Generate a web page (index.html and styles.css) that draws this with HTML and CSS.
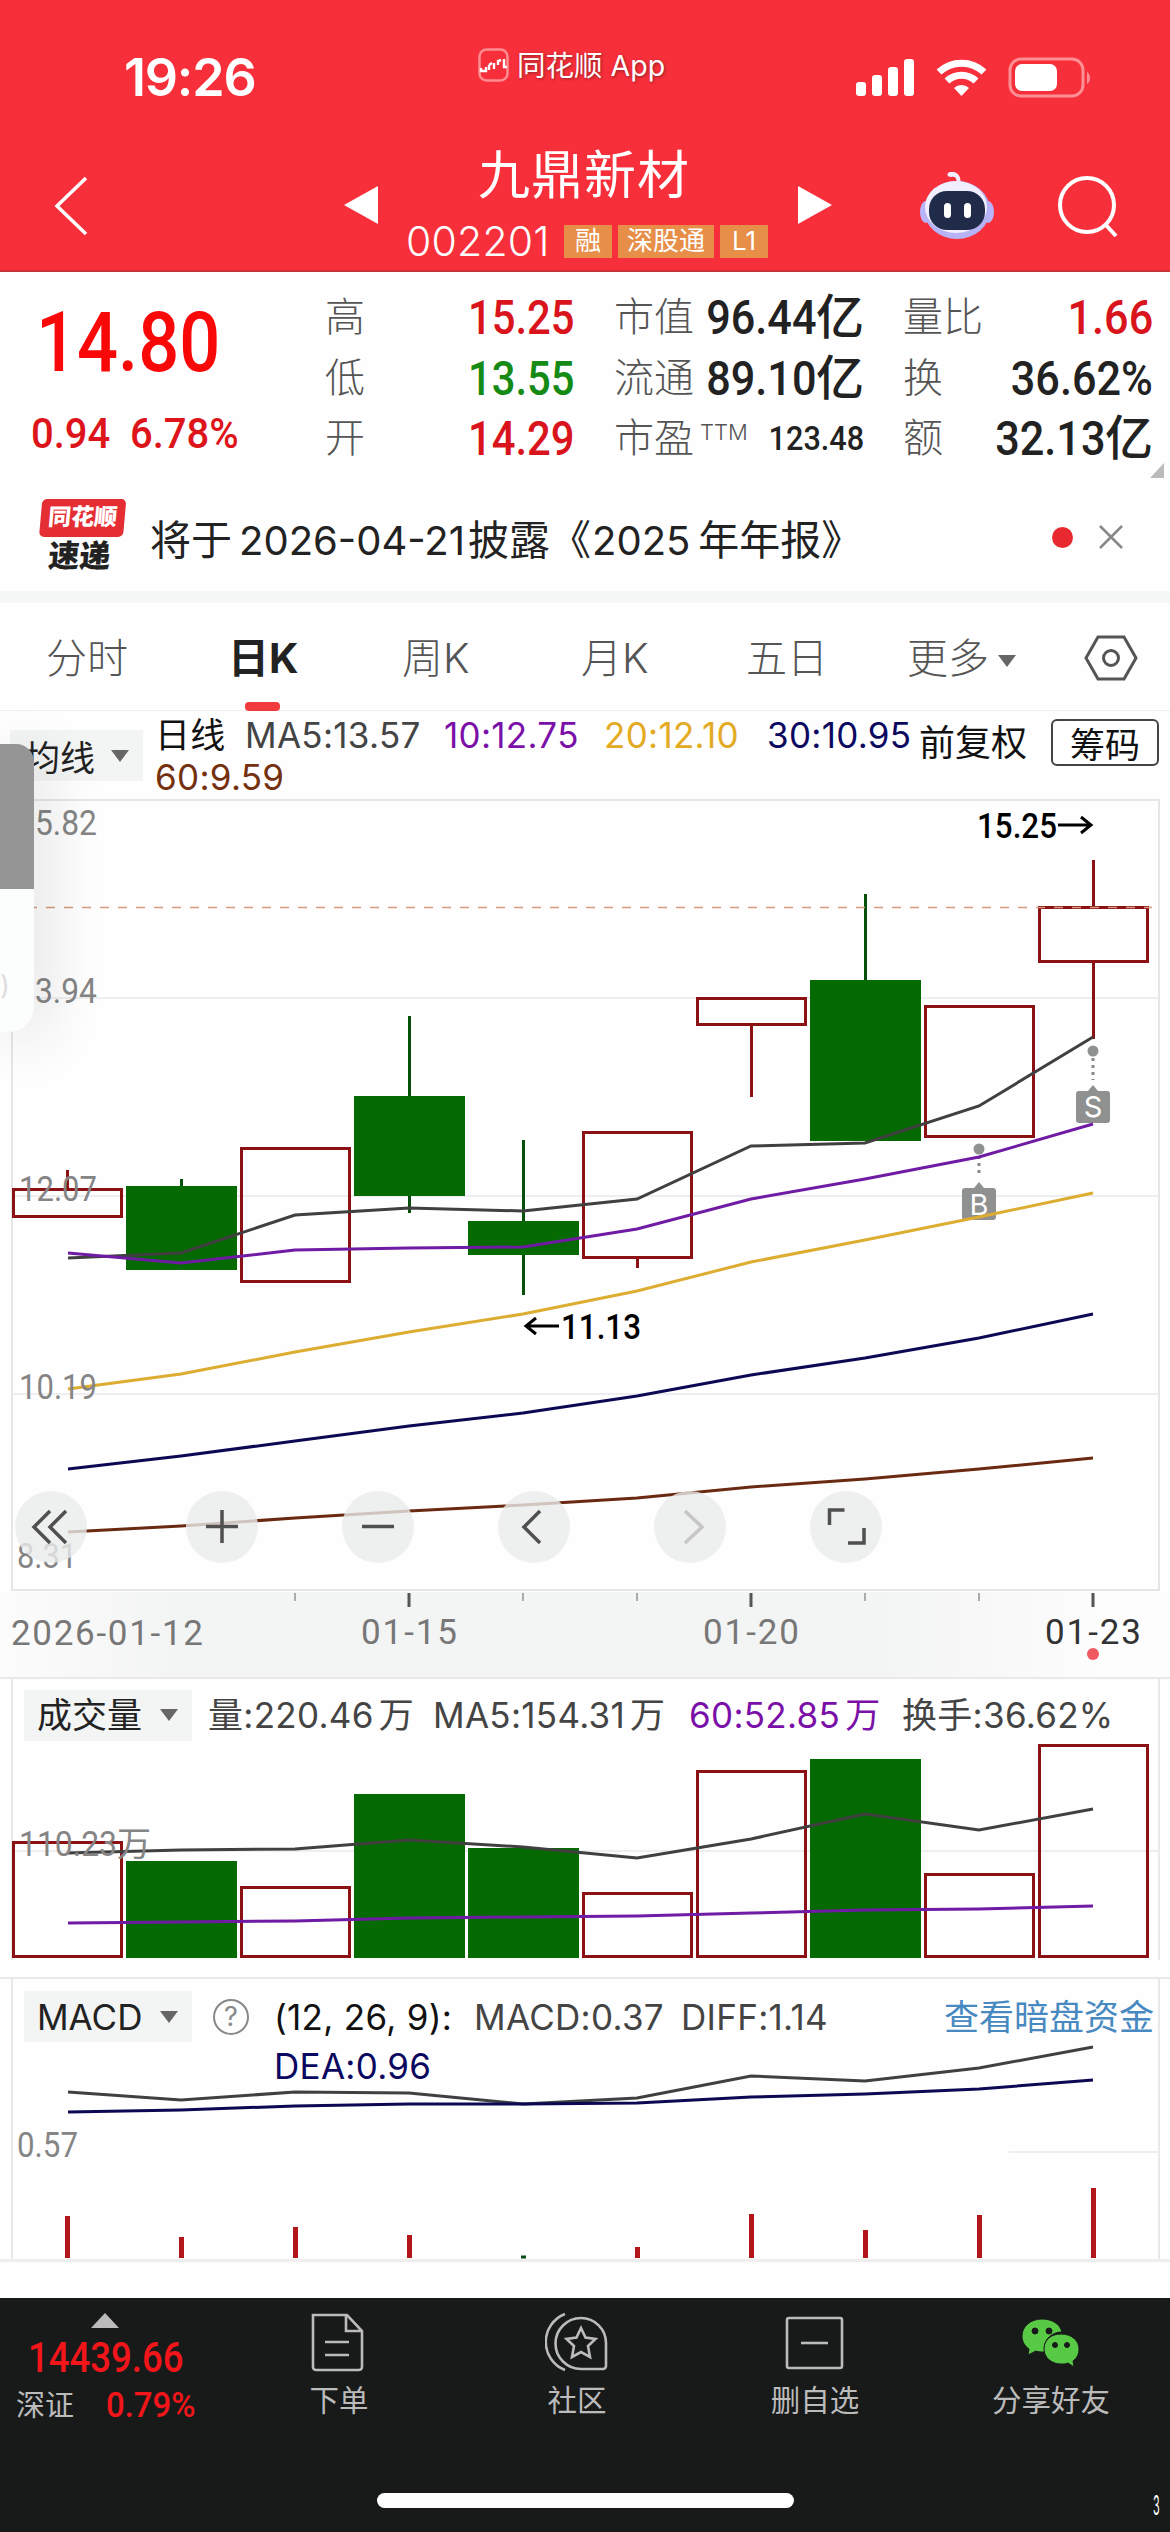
FILE: index.html
```html
<!DOCTYPE html>
<html lang="zh-CN">
<head>
  <meta charset="UTF-8">
  <meta name="viewport" content="width=device-width, initial-scale=1.0">
  <title>九鼎新材 002201</title>
  <link rel="stylesheet" href="styles.css">
</head>
<body>
  <header class="header">
    <div class="status-bar">
      <span class="time">19:26</span>
      <div class="source-app">
        <svg width="32" height="34" viewBox="0 0 32 34" fill="none" stroke="#fff">
          <rect x="1.5" y="1.5" width="28" height="31" rx="7" stroke="#ff8c90" stroke-width="2.5"/>
          <path d="M3 20v3h5v-4M11 17v5M11 17l3-2M16 15v6M20 17v-4l3-1M26 11v8h3" stroke-width="2.4"/>
        </svg>
        <span>同花顺 App</span>
      </div>
      <svg class="status-icons" width="236" height="44" viewBox="0 0 236 44">
        <g fill="#fff">
          <rect x="0" y="26" width="10" height="14" rx="3"/>
          <rect x="16" y="19" width="10" height="21" rx="3"/>
          <rect x="32" y="11" width="10" height="29" rx="3"/>
          <rect x="48" y="3" width="10" height="37" rx="3"/>
        </g>
        <g fill="none" stroke="#fff" stroke-width="7">
          <path d="M83 16a33 33 0 0 1 45 0"/>
          <path d="M91 25a21 21 0 0 1 29 0"/>
        </g>
        <path d="M98 32a11 11 0 0 1 15 0l-7.500 8z" fill="#fff"/>
        <rect x="154" y="3" width="73" height="37" rx="11" fill="none" stroke="#fc8f94" stroke-width="3"/>
        <rect x="159" y="8" width="42" height="27" rx="7" fill="#fff"/>
        <path d="M231 16v12c4-2 4-10 0-12z" fill="#fc8f94"/>
      </svg>
    </div>
    <div class="nav-bar">
      <svg class="back" width="36" height="62" viewBox="0 0 36 62"><path d="M33 3L4 31l29 28" fill="none" stroke="#fff" stroke-width="3.500"/></svg>
      <svg class="prev" width="34" height="38" viewBox="0 0 34 38"><path d="M34 0v38L0 19z" fill="#fff"/></svg>
      <div class="stock">
        <h1>九鼎新材</h1>
        <div class="stock-code">
          <span class="code">002201</span>
          <span class="tag">融</span>
          <span class="tag tag-wide">深股通</span>
          <span class="tag">L1</span>
        </div>
      </div>
      <svg class="next" width="34" height="38" viewBox="0 0 34 38"><path d="M0 0v38l34-19z" fill="#fff"/></svg>
      <svg class="robot" width="74" height="68" viewBox="0 0 74 68">
        <path d="M36 12c2-7-2-8-5-7-4 0-5-4-1-5 7-1 12 4 10 12z" fill="#f4efff"/>
        <ellipse cx="6" cy="40" rx="6" ry="11" fill="#b9b4fb"/>
        <ellipse cx="68" cy="40" rx="6" ry="11" fill="#b9b4fb"/>
        <ellipse cx="37" cy="38" rx="33" ry="29" fill="#b7b2f6"/>
        <ellipse cx="36" cy="35" rx="31" ry="26" fill="#f1eeff"/>
        <rect x="9" y="19" width="56" height="39" rx="18" fill="#202a49"/>
        <rect x="24" y="31" width="7" height="15" rx="3.500" fill="#fff"/>
        <rect x="44" y="31" width="7" height="15" rx="3.500" fill="#fff"/>
      </svg>
      <svg class="search" width="64" height="64" viewBox="0 0 64 64" fill="none" stroke="#fff" stroke-width="4"><circle cx="31" cy="30" r="27"/><path d="M49 49l11 12"/></svg>
    </div>
  </header>

  <section class="quote">
    <div class="quote-main">
      <div class="price"><span class="din">14.80</span></div>
      <div class="change"><span class="din">0.94</span><span class="din">6.78%</span></div>
    </div>
    <dl class="quote-col col-a">
      <dt>高</dt><dd class="up"><span class="din">15.25</span></dd>
      <dt>低</dt><dd class="down"><span class="din">13.55</span></dd>
      <dt>开</dt><dd class="up"><span class="din">14.29</span></dd>
    </dl>
    <dl class="quote-col col-b">
      <dt>市值</dt><dd><span class="din">96.44</span>亿</dd>
      <dt>流通</dt><dd><span class="din">89.10</span>亿</dd>
      <dt>市盈<sup>TTM</sup></dt><dd class="small"><span class="din">123.48</span></dd>
    </dl>
    <dl class="quote-col col-c">
      <dt>量比</dt><dd class="up"><span class="din">1.66</span></dd>
      <dt>换</dt><dd><span class="din">36.62%</span></dd>
      <dt>额</dt><dd><span class="din">32.13</span>亿</dd>
    </dl>
    <i class="corner"></i>
  </section>

  <section class="news">
    <div class="news-logo">
      <span class="news-logo-top">同花顺</span>
      <span class="news-logo-bottom">速递</span>
    </div>
    <p>将于<span class="num">2026-04-21</span>披露《<span class="num year">2025</span>年年报》</p>
    <i class="dot"></i>
    <svg width="24" height="24" viewBox="0 0 24 24"><path d="M1 1l22 22M23 1L1 23" stroke="#888" stroke-width="2.500"/></svg>
  </section>

  <nav class="tabs">
    <a>分时</a>
    <a class="active">日K</a>
    <a>周K</a>
    <a>月K</a>
    <a>五日</a>
    <a>更多<i class="caret"></i></a>
    <svg width="54" height="46" viewBox="0 0 54 46" fill="none" stroke="#555" stroke-width="3"><path d="M14 2h26l12 21-12 21H14L2 23z"/><circle cx="27" cy="23" r="7.500"/></svg>
  </nav>

  <section class="ma-row">
    <div class="picker">均线<i class="caret"></i></div>
    <div class="ma-values">
      <span class="ma-name">日线</span>
      <span>MA5:13.57</span>
      <span class="purple">10:12.75</span>
      <span class="yellow">20:12.10</span>
      <span class="navy">30:10.95</span>
      <span class="brown">60:9.59</span>
    </div>
    <span class="adjust">前复权</span>
    <button class="chips">筹码</button>
  </section>

  <section class="chart">
    <svg width="1170" height="794" viewBox="0 798 1170 794">
      <rect class="frame" x="12" y="800" width="1147" height="790"/>
      <path class="grid" d="M12 998H1158M12 1196H1158M12 1394H1158"/>
      <g class="red-candle">
        <path d="M67.500 1170v18M637.500 1259v9M751.500 1026v71M1093.500 860v46M1093.500 963v76"/>
        <rect x="13.500" y="1189.500" width="108" height="27"/>
        <rect x="241.500" y="1148.500" width="108" height="133"/>
        <rect x="583.500" y="1132.500" width="108" height="125"/>
        <rect x="697.500" y="998.500" width="108" height="26"/>
        <rect x="925.500" y="1006.500" width="108" height="130"/>
        <rect x="1039.500" y="907.500" width="108" height="54"/>
      </g>
      <g class="green-candle">
        <path d="M181.500 1179v20M409.500 1016v197M523.500 1140v155M865.500 894v100"/>
        <rect x="126" y="1186" width="111" height="84"/>
        <rect x="354" y="1096" width="111" height="100"/>
        <rect x="468" y="1221" width="111" height="34"/>
        <rect x="810" y="980" width="111" height="161"/>
      </g>
      <path class="last-price" d="M28 907.500H1152"/>
      <polyline class="line ma5" points="68,1258 181,1253 295,1215 409,1208 523,1211 637,1199 751,1146 865,1143 979,1106 1093,1037"/>
      <g class="marker">
        <circle cx="1093" cy="1051" r="5.500"/>
        <path class="dots" d="M1093 1058v22"/>
        <path d="M1080 1091h8l5-6 5 6h9a3 3 0 0 1 3 3v26a3 3 0 0 1-3 3h-28a3 3 0 0 1-3-3v-26a3 3 0 0 1 3-3z"/>
        <text x="1093" y="1117">S</text>
        <circle cx="979" cy="1149" r="5.500"/>
        <path class="dots" d="M979 1156v20"/>
        <path d="M966 1188h8l5-6 5 6h9a3 3 0 0 1 3 3v26a3 3 0 0 1-3 3h-28a3 3 0 0 1-3-3v-26a3 3 0 0 1 3-3z"/>
        <text x="979" y="1215">B</text>
      </g>
      <polyline class="line ma10" points="68,1253 181,1263 295,1250 409,1248 523,1247 637,1229 751,1199 865,1179 979,1157 1093,1124"/>
      <polyline class="line ma20" points="68,1389 181,1374 295,1352 409,1332 523,1314 637,1291 751,1262 865,1240 979,1217 1093,1193"/>
      <polyline class="line ma30" points="68,1469 181,1456 295,1441 409,1426 523,1413 637,1396 751,1375 865,1358 979,1338 1093,1314"/>
      <polyline class="line ma60" points="68,1532 181,1526 295,1518 409,1511 523,1505 637,1498 751,1487 865,1479 979,1469 1093,1458"/>
      <g class="axis">
        <text x="35" y="835" textLength="62" lengthAdjust="spacingAndGlyphs">5.82</text>
        <text x="35" y="1003" textLength="62" lengthAdjust="spacingAndGlyphs">3.94</text>
        <text x="19" y="1201" textLength="78" lengthAdjust="spacingAndGlyphs">12.07</text>
        <text x="19" y="1399" textLength="78" lengthAdjust="spacingAndGlyphs">10.19</text>
        <text x="17" y="1568" textLength="60" lengthAdjust="spacingAndGlyphs">8.31</text>
      </g>
      <g class="peak">
        <text x="977" y="838" textLength="80" lengthAdjust="spacingAndGlyphs">15.25</text>
        <text x="561" y="1339" textLength="80" lengthAdjust="spacingAndGlyphs">11.13</text>
        <path d="M1058 825h33M1081 817l10 8-10 8M559 1326h-33M536 1318l-10 8 10 8"/>
      </g>
      <g class="tool">
        <circle cx="51" cy="1527" r="36"/><circle cx="222" cy="1527" r="36"/><circle cx="378" cy="1527" r="36"/>
        <circle cx="534" cy="1527" r="36"/><circle cx="690" cy="1527" r="36"/><circle cx="846" cy="1527" r="36"/>
        <path d="M50 1511l-16 16 16 16M66 1511l-16 16 16 16M206 1526.500h32M222 1510v33M362 1526.500h32M540 1511l-16 16 16 16M829.500 1525v-15h15M864 1528v15h-16"/>
        <path class="disabled" d="M685 1511l17 16-17 16"/>
      </g>
    </svg>
    <div class="side-panel"><i>)</i></div>
  </section>

  <section class="dates">
    <svg width="1170" height="85" viewBox="0 1592 1170 85">
      <path d="M295 1593v8M523 1593v8M637 1593v8M865 1593v8M979 1593v8" stroke="#aaa" stroke-width="2"/>
      <path d="M409 1593v14M751 1593v14M1093 1593v14" stroke="#555" stroke-width="3"/>
      <g class="axis date">
        <text x="11" y="1645" textLength="192">2026-01-12</text>
        <text x="361" y="1644" textLength="96">01-15</text>
        <text x="703" y="1644" textLength="96">01-20</text>
        <text class="today" x="1045" y="1644" textLength="96">01-23</text>
      </g>
      <circle cx="1093" cy="1654" r="6" fill="#ef5a62"/>
    </svg>
  </section>

  <section class="panel volume">
    <div class="panel-head">
      <div class="picker">成交量<i class="caret"></i></div>
      <span>量:220.46<b>万</b></span>
      <span>MA5:154.31<b>万</b></span>
      <span class="purple">60:52.85<b>万</b></span>
      <span>换手:36.62%</span>
    </div>
    <svg width="1170" height="218" viewBox="0 1742 1170 218">
      <path class="grid" d="M12 1851H1158"/>
      <g class="red-candle">
        <rect x="13.500" y="1842.500" width="108" height="114"/>
        <rect x="241.500" y="1887.500" width="108" height="69"/>
        <rect x="583.500" y="1893.500" width="108" height="63"/>
        <rect x="697.500" y="1771.500" width="108" height="185"/>
        <rect x="925.500" y="1874.500" width="108" height="82"/>
        <rect x="1039.500" y="1745.500" width="108" height="211"/>
      </g>
      <g class="green-candle">
        <rect x="126" y="1861" width="111" height="97"/>
        <rect x="354" y="1794" width="111" height="164"/>
        <rect x="468" y="1848" width="111" height="110"/>
        <rect x="810" y="1759" width="111" height="199"/>
      </g>
      <polyline class="line ma5" points="68,1853 181,1850 295,1849 409,1840 523,1847 637,1858 751,1839 865,1814 979,1830 1093,1809"/>
      <polyline class="line ma10" points="68,1923 181,1922 295,1921 409,1918 523,1917 637,1916 751,1913 865,1910 979,1909 1093,1906"/>
      <text class="axis" x="19" y="1856" textLength="98" lengthAdjust="spacingAndGlyphs">110.23</text>
      <text class="axis cjk" x="117" y="1856">万</text>
    </svg>
  </section>

  <section class="panel macd">
    <div class="panel-head">
      <div class="picker">MACD<i class="caret"></i></div>
      <i class="help">?</i>
      <span class="black">(12, 26, 9):</span>
      <span>MACD:0.37</span>
      <span>DIFF:1.14</span>
      <a class="link">查看暗盘资金</a>
      <span class="navy dea">DEA:0.96</span>
    </div>
    <svg width="1170" height="222" viewBox="0 2040 1170 222">
      <path class="grid" d="M1009 2152H1158"/>
      <polyline class="line ma5" points="68,2092 181,2100 295,2092 409,2093 523,2104 637,2098 751,2076 865,2081 979,2068 1093,2047"/>
      <polyline class="line ma30" points="68,2112 181,2110 295,2106 409,2104 523,2104 637,2103 751,2097 865,2094 979,2089 1093,2080"/>
      <path class="macd-bars" d="M67.500 2216v42M181.500 2237v21M295.500 2227v31M409.500 2235v23M637.500 2247v11M751.500 2214v44M865.500 2230v28M979.500 2215v43M1093.500 2188v70"/>
      <path d="M521 2257h5" stroke="#064c16" stroke-width="3"/>
      <text class="axis" x="17" y="2157" textLength="61" lengthAdjust="spacingAndGlyphs">0.57</text>
    </svg>
  </section>

  <footer class="footer">
    <div class="index">
      <i class="up-arrow"></i>
      <div class="index-value"><span class="din">14439.66</span></div>
      <div class="index-change">深证<span class="din">0.79%</span></div>
    </div>
    <a>
      <svg class="order" width="60" height="60" viewBox="0 0 60 60"><path d="M6 3h34l15 16v36a3 3 0 0 1-3 3H9a3 3 0 0 1-3-3zM39 3v16h16M18 30h24M18 43h24"/></svg>
      下单
    </a>
    <a>
      <svg width="64" height="60" viewBox="0 0 64 60"><path d="M20 2a30 30 0 0 0 0 56M36 6a25 25 0 1 0 0 51h22a3 3 0 0 0 3-3V31A25 25 0 0 0 36 6zM36 16l4.500 9.500 10 1.500-7.500 7 2 11-9-5-9 5 2-11-7.500-7 10-1.500z"/></svg>
      社区
    </a>
    <a>
      <svg width="60" height="60" viewBox="0 0 60 60"><rect x="2" y="6" width="55" height="50" rx="2"/><path d="M16 31h27"/></svg>
      删自选
    </a>
    <a class="share">
      <svg class="wechat" width="60" height="54" viewBox="0 0 60 54">
        <path d="M21 3C9 3 1 11 1 20c0 6 3 10 7 13l-1 6 8-4c2 1 6 1 9 1-3-11 6-20 17-20C39 8 31 3 21 3z"/>
        <path d="M40 18c-10 0-17 6-17 15 0 8 7 15 17 15 2 0 5 0 7-1l6 4-1-6c4-3 6-7 6-12 0-9-8-15-18-15z"/>
        <circle class="eye" cx="14" cy="15" r="3"/><circle class="eye" cx="28" cy="15" r="3"/>
        <circle class="eye" cx="34" cy="29" r="2.500"/><circle class="eye" cx="46" cy="29" r="2.500"/>
      </svg>
      分享好友
    </a>
    <div class="home-bar"></div>
    <i class="edge-mark">3</i>
  </footer>
</body>
</html>
```
FILE: styles.css
```css
* {
  box-sizing: border-box;
}

body {
  margin: 0;
  width: 1170px;
  height: 2532px;
  overflow: hidden;
  background: #fefefe;
  color: #222;
  font-family: Inter, "Noto Sans CJK SC", sans-serif;
}

h1, p, dl, dd {
  margin: 0;
}

i {
  font-style: normal;
}

svg {
  display: block;
  flex: none;
}

/* narrow digits */
.din {
  display: inline-block;
  font-family: Roboto, "Noto Sans CJK SC", sans-serif;
  transform: scaleX(0.87);
  transform-origin: right;
}

.purple { color: #7a10a8; }
.yellow { color: #e3ab23; }
.navy { color: #0b0860; }
.brown { color: #74300f; }
.black { color: #111; }

.caret {
  display: inline-block;
  border: 9px solid transparent;
  border-top: 12px solid #666;
  border-bottom: 0;
}

/* header */
.header {
  height: 272px;
  background: #f72f3a;
  border-bottom: 2px solid #c93338;
  color: #fff;
}

.status-bar {
  display: flex;
  height: 146px;
}

.time {
  width: 478px;
  padding: 46px 0 0 124px;
  font-size: 52px;
  line-height: 63px;
  font-weight: 600;
  letter-spacing: -1.2px;
}

.source-app {
  display: flex;
  width: 378px;
  padding-top: 48px;
  gap: 7px;
  font-size: 28.500px;
  line-height: 36px;
  text-shadow: 1px 1px 3px #8d2228;
}

.status-icons {
  margin-top: 56px;
}

.nav-bar {
  display: flex;
}

.back { margin: 29px 0 0 53px; }
.prev { margin: 40px 0 0 255px; }
.next { margin: 40px 0 0 29px; }
.robot { margin: 26px 0 0 88px; }
.search { margin: 29px 0 0 62px; }

.stock {
  width: 363px;
  margin-left: 28px;
}

.stock h1 {
  padding-left: 72px;
  font-size: 52px;
  line-height: 59px;
  font-weight: 400;
  letter-spacing: 1px;
}

.stock-code {
  display: flex;
  gap: 6px;
  margin-top: 17px;
}

.code {
  width: 152px;
  font-size: 41px;
  line-height: 38px;
  font-weight: 300;
  letter-spacing: 0.2px;
}

.tag {
  width: 48px;
  height: 33px;
  margin-top: 3px;
  background: #e78e48;
  font-size: 26px;
  line-height: 32px;
  text-align: center;
}

.tag-wide { width: 96px; }

/* quote */
.quote {
  position: relative;
  display: flex;
  height: 214px;
}

.quote-main {
  width: 325px;
  color: #f90808;
}

.quote-main .din {
  transform-origin: left;
}

.price {
  padding: 24px 0 0 36px;
  font-size: 83px;
  line-height: 90px;
  font-weight: 500;
}

.change {
  display: flex;
  margin-top: 20px;
  padding-left: 31px;
  color: #dd151b;
  font-size: 43px;
  line-height: 50px;
  font-weight: 500;
}

.change .din {
  transform: scaleX(0.93);
}

.change span + span {
  margin-left: 14px;
}

.quote-col {
  display: grid;
  grid-template-columns: 82px 1fr;
  grid-auto-rows: 60.5px;
  padding-top: 14px;
  line-height: 61px;
}

.quote-col dt {
  color: #555;
  font-size: 40px;
  font-weight: 300;
  white-space: nowrap;
}

.quote-col dt sup {
  margin-left: 6px;
  font-size: 22px;
  line-height: 0;
  vertical-align: 12px;
}

.quote-col dd {
  font-size: 48px;
  font-weight: 500;
  text-align: right;
  white-space: nowrap;
}

.quote-col dd.small { font-size: 34px; }

.quote-col .up { color: #d9141c; }
.quote-col .down { color: #158a15; }

.col-a { width: 249px; }
.col-b { width: 250px; margin-left: 40px; }
.col-c { width: 250px; margin-left: 39px; }

.col-b .din,
.col-c .din {
  margin-left: -22px;
  transform: scaleX(0.9);
}

.corner {
  position: absolute;
  right: 6px;
  bottom: 8px;
  border-left: 14px solid transparent;
  border-bottom: 15px solid #bbb;
}

/* news */
.news {
  display: flex;
  align-items: center;
  height: 102px;
  margin-bottom: 3px;
  padding: 0 47px 0 39px;
}

.news-logo {
  width: 84px;
  height: 76px;
  margin-right: 27px;
  text-align: center;
  transform: skewX(-5deg);
  font-weight: 900;
}

.news-logo-top {
  display: block;
  height: 38px;
  border-radius: 5px;
  background: #e52d34;
  color: #fff;
  font-size: 23px;
  line-height: 36px;
}

.news-logo-bottom {
  display: block;
  font-size: 31px;
  line-height: 38px;
}

.news p {
  flex: 1;
  font-size: 41px;
  font-weight: 400;
  white-space: nowrap;
}

.news .num {
  margin: 0 3px 0 7px;
  font-size: 40px;
}

.news .num.year {
  margin: 0 8px 0 1px;
}

.dot {
  width: 21px;
  height: 21px;
  margin-right: 26px;
  border-radius: 50%;
  background: #e8292f;
}

/* period tabs */
.tabs {
  display: grid;
  grid-template-columns: 182px 174px 179px 165px 161px 177px 54px;
  height: 120px;
  padding: 10px 0 0 46px;
  border-top: 12px solid #f6f7f7;
  border-bottom: 1px solid #eee;
  color: #555;
  font-size: 41px;
  line-height: 90px;
  font-weight: 300;
}

.tabs .active {
  position: relative;
  color: #222;
  font-weight: 700;
}

.active::after {
  content: "";
  position: absolute;
  left: 17px;
  bottom: -1px;
  width: 35px;
  height: 9px;
  border-radius: 4px;
  background: #f03a3c;
}

.tabs .caret {
  margin: 0 0 6px 9px;
}

.tabs svg {
  margin-top: 22px;
}

/* average lines */
.ma-row {
  display: flex;
  height: 87px;
  font-size: 35px;
}

.picker {
  display: flex;
  align-items: center;
  height: 51px;
  background: #f3f4f4;
  color: #222;
}

.ma-row .picker {
  width: 133px;
  margin: 19px 12px 0 10px;
  padding-left: 15px;
}

.ma-row .caret {
  margin-left: 16px;
}

.ma-values {
  display: grid;
  grid-template-columns: 90px 199px 160px 163px 152px;
  grid-template-rows: 42px 42px;
  align-content: start;
  padding-top: 3px;
  line-height: 42px;
  letter-spacing: 0.3px;
  white-space: nowrap;
  color: #444;
}

.ma-name {
  color: #111;
}

.adjust {
  width: 132px;
  padding-top: 11px;
  color: #111;
  font-size: 36px;
  line-height: 42px;
}

.chips {
  width: 108px;
  height: 47px;
  margin-top: 8px;
  padding: 0;
  border: 2px solid #444;
  border-radius: 6px;
  background: #fff;
  color: #111;
  font: 35px/40px "Noto Sans CJK SC", sans-serif;
}

/* charts */
.chart {
  position: relative;
  height: 794px;
}

.frame {
  fill: none;
  stroke: #e6e6e6;
  stroke-width: 2;
}

.grid {
  fill: none;
  stroke: #eeeef0;
  stroke-width: 2;
}

.red-candle {
  fill: #fff;
  stroke: #8b1114;
  stroke-width: 3;
}

.red-candle rect { fill: none; }

.green-candle {
  fill: #066a02;
}

.green-candle path {
  stroke: #06500b;
  stroke-width: 3;
}

.last-price {
  stroke: #d69b7c;
  stroke-width: 1.5;
  stroke-dasharray: 9 9;
}

.line {
  fill: none;
  stroke-width: 3;
}

.ma5 { stroke: #404040; }
.ma10 { stroke: #6f1ba4; }
.ma20 { stroke: #dcad31; }
.ma30 { stroke: #0c0854; }
.ma60 { stroke: #6a2a12; }

.macd-bars {
  stroke: #b3161a;
  stroke-width: 5;
}

.marker { fill: #8f9090; }

.marker .dots {
  stroke: #888;
  stroke-width: 3;
  stroke-dasharray: 3 4;
}

.marker text {
  fill: #fff;
  font-size: 29px;
  text-anchor: middle;
}

.axis {
  fill: #858585;
  font-family: Roboto, sans-serif;
  font-size: 35px;
}

.axis.cjk {
  font-family: "Noto Sans CJK SC", sans-serif;
  font-size: 34px;
}

.date { fill: #777; }
.today { fill: #333; }

.peak {
  fill: #000;
  font-family: Roboto, sans-serif;
  font-size: 35px;
  font-weight: 500;
}

.peak path {
  fill: none;
  stroke: #000;
  stroke-width: 3;
}

.tool circle { fill: rgba(234, 235, 235, 0.8); }

.tool path {
  fill: none;
  stroke: #505050;
  stroke-width: 3.5;
}

.tool .disabled { stroke: #c6c6c6; }

.side-panel {
  position: absolute;
  left: 0;
  top: -54px;
  width: 34px;
  height: 288px;
  padding-top: 225px;
  border-radius: 0 18px 26px 0;
  background: linear-gradient(#959595 145px, #fcfdfd 145px);
  box-shadow: 10px 10px 60px rgba(0, 0, 0, 0.14);
  color: #ddd;
  font-size: 27px;
}

.dates {
  height: 85px;
  background: linear-gradient(90deg, #fcfcfc, #f3f4f4 15%, #f3f4f4 75%, #fdfdfd 95%);
}

/* indicator panels */
.panel {
  border: solid #e9e9e9;
  border-width: 2px 0 0;
  margin-bottom: 17px;
  background: linear-gradient(#e9e9e9, #e9e9e9) 11px 0 / 2px 100% no-repeat,
    linear-gradient(#e9e9e9, #e9e9e9) 1158px 0 / 2px 100% no-repeat;
}

.panel-head {
  display: grid;
  color: #444;
  font-size: 35px;
  line-height: 42px;
  letter-spacing: 0.3px;
  white-space: nowrap;
}

.panel-head b {
  margin-left: 5px;
  font-weight: 400;
}

.panel .picker {
  width: 168px;
  padding-left: 13px;
  letter-spacing: 0;
}

.panel .caret { margin-left: 18px; }

.volume { height: 283px; }

.volume .panel-head {
  grid-template-columns: 184px 225px 256px 213px auto;
  align-items: center;
  height: 63px;
  padding-left: 24px;
  padding-top: 9px;
}

.macd {
  height: 285px;
  margin-bottom: 0;
  border-bottom: 3px solid #eee;
}

.macd .panel-head {
  grid-template-columns: 189px 61px 200px 207px 263px auto;
  grid-template-rows: 51px 48px;
  align-items: center;
  height: 61px;
  padding: 12px 0 0 24px;
}

.help {
  width: 36px;
  height: 36px;
  border: 2.500px solid #888;
  border-radius: 50%;
  color: #888;
  font-size: 27px;
  line-height: 31px;
  text-align: center;
}

.link {
  color: #4789c0;
  letter-spacing: 0;
}

.dea { grid-column: 3; }

/* footer */
.footer {
  position: relative;
  display: flex;
  align-items: flex-start;
  height: 234px;
  margin-top: 36px;
  background: #181a1a;
  color: #bbb;
}

.footer a {
  display: flex;
  flex-direction: column;
  align-items: center;
  width: 238px;
  padding-top: 14px;
  font-size: 29.500px;
  line-height: 44px;
}

.footer a svg {
  margin-bottom: 6px;
  fill: none;
  stroke: #bbb;
  stroke-width: 2.6;
}

.footer a .order { margin-right: 5px; }

.footer .share { width: 234px; }

.footer .share .wechat {
  margin: 4px 0 8px;
  fill: #58c944;
  stroke: #181a1a;
  stroke-width: 1;
}

.footer .wechat .eye { fill: #181a1a; }

.index {
  width: 220px;
  color: #f2151a;
}

.up-arrow {
  display: block;
  margin: 15px 0 0 91px;
  width: 0;
  border: 14px solid transparent;
  border-bottom: 15px solid #bbb;
  border-top: 0;
}

.index .din {
  transform-origin: left;
  font-weight: 500;
}

.index-value {
  padding-left: 28px;
  margin-top: 4px;
  font-size: 42px;
  line-height: 50px;
}

.index-change {
  display: flex;
  padding-left: 16px;
  gap: 32px;
  color: #bbb;
  font-size: 29px;
  line-height: 46px;
}

.index-change .din {
  transform: scaleX(0.94);
  color: #f2151a;
  font-size: 35px;
}

.home-bar {
  position: absolute;
  left: 377px;
  bottom: 24px;
  width: 417px;
  height: 15px;
  border-radius: 8px;
  background: #fff;
}

.edge-mark {
  position: absolute;
  right: 10px;
  bottom: 10px;
  color: #fff;
  font-size: 27px;
  transform: scaleX(0.4);
  transform-origin: right;
}
```
